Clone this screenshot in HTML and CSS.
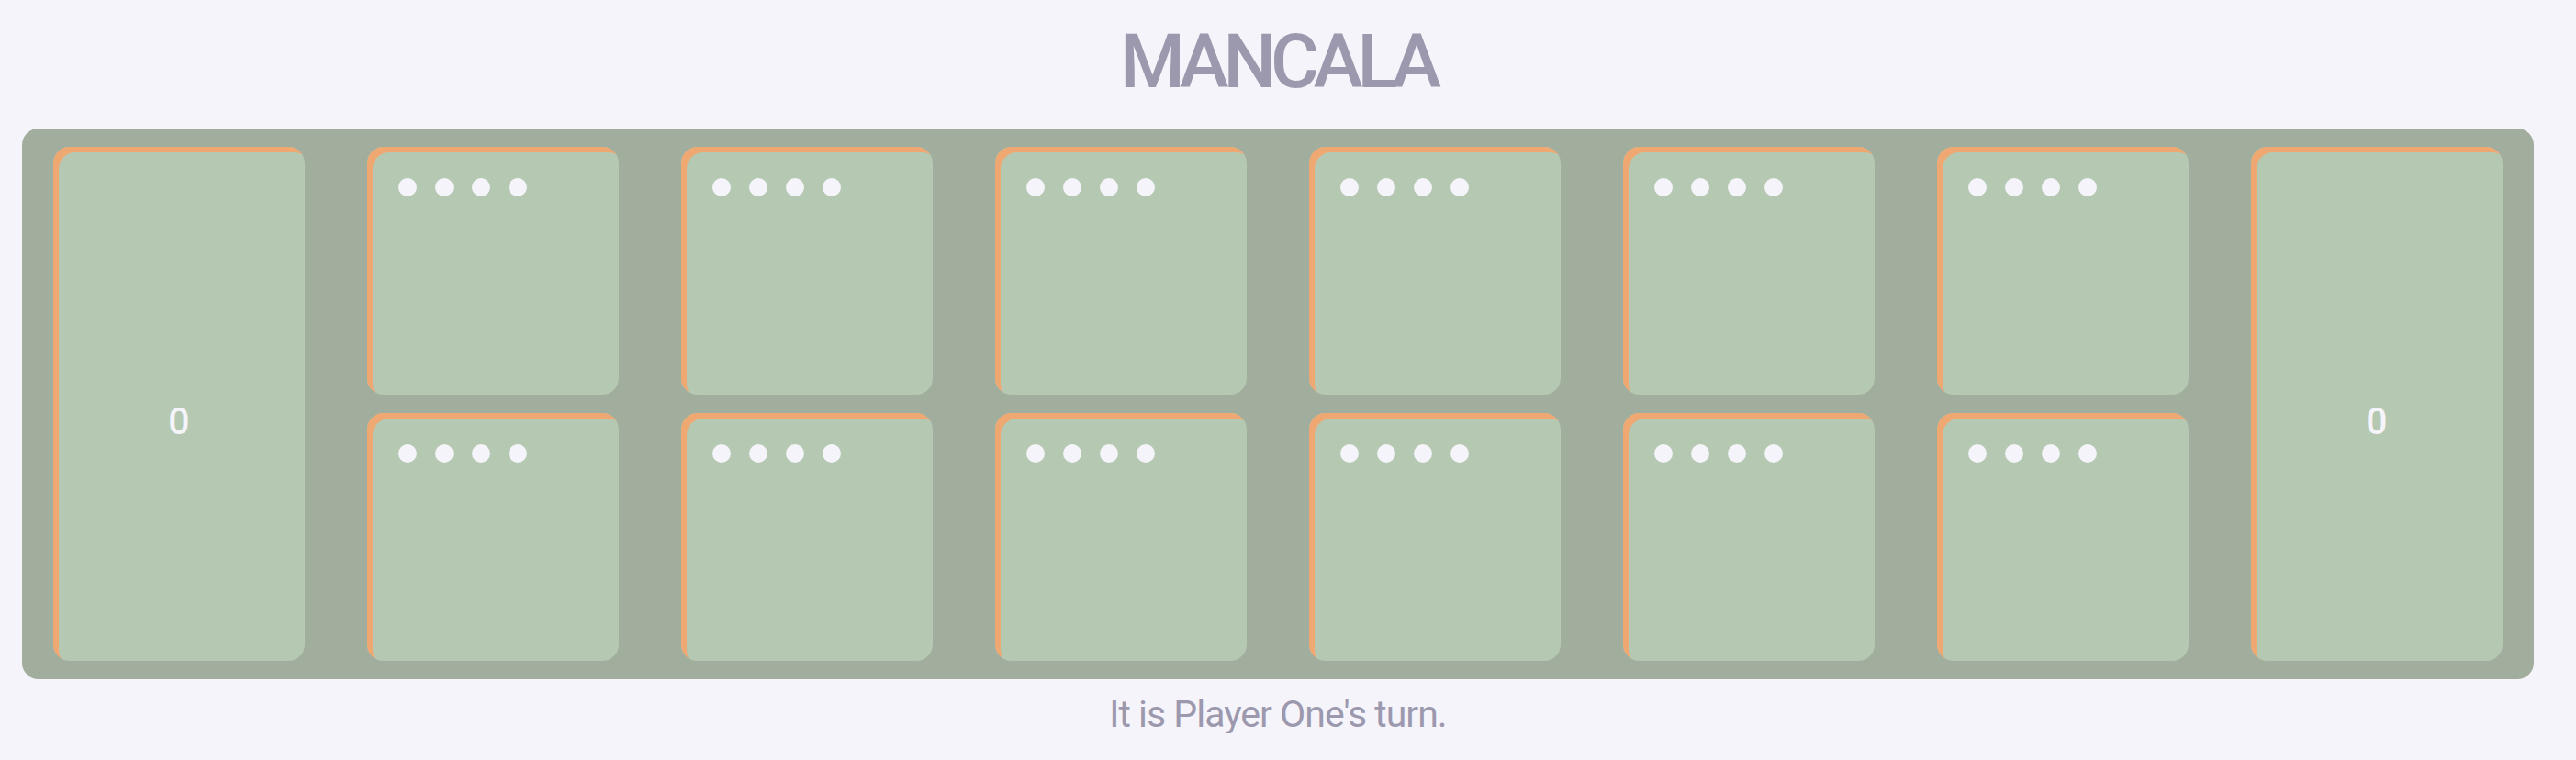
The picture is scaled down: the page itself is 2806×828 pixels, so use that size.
FILE: index.html
```html
<!DOCTYPE html>
<html lang="en">
<head>
<meta charset="utf-8">
<title>Mancala</title>
<link rel="stylesheet" href="styles.css">
</head>
<body>
<main class="game">
  <h1 class="title">MANCALA</h1>
  <div class="board">
    <div class="store store-left"><span class="count">0</span></div>
    <div class="pit"><span class="seed"></span><span class="seed"></span><span class="seed"></span><span class="seed"></span></div>
    <div class="pit"><span class="seed"></span><span class="seed"></span><span class="seed"></span><span class="seed"></span></div>
    <div class="pit"><span class="seed"></span><span class="seed"></span><span class="seed"></span><span class="seed"></span></div>
    <div class="pit"><span class="seed"></span><span class="seed"></span><span class="seed"></span><span class="seed"></span></div>
    <div class="pit"><span class="seed"></span><span class="seed"></span><span class="seed"></span><span class="seed"></span></div>
    <div class="pit"><span class="seed"></span><span class="seed"></span><span class="seed"></span><span class="seed"></span></div>
    <div class="store store-right"><span class="count">0</span></div>
    <div class="pit"><span class="seed"></span><span class="seed"></span><span class="seed"></span><span class="seed"></span></div>
    <div class="pit"><span class="seed"></span><span class="seed"></span><span class="seed"></span><span class="seed"></span></div>
    <div class="pit"><span class="seed"></span><span class="seed"></span><span class="seed"></span><span class="seed"></span></div>
    <div class="pit"><span class="seed"></span><span class="seed"></span><span class="seed"></span><span class="seed"></span></div>
    <div class="pit"><span class="seed"></span><span class="seed"></span><span class="seed"></span><span class="seed"></span></div>
    <div class="pit"><span class="seed"></span><span class="seed"></span><span class="seed"></span><span class="seed"></span></div>
  </div>
  <p class="status">It is Player One's turn.</p>
</main>
</body>
</html>
```
FILE: styles.css
```css
html, body {
  margin: 0;
  padding: 0;
  background: #f5f4fa;
}

.game {
  margin: 0 46px 0 24px;
  display: flex;
  flex-direction: column;
  align-items: center;
  font-family: Roboto, "Noto Sans", sans-serif;
  color: #9c99ae;
}

.title {
  margin: 0;
  height: 140px;
  box-sizing: border-box;
  padding-top: 27px;
  font-size: 81px;
  line-height: 1;
  font-weight: 500;
  font-kerning: none;
  letter-spacing: -6px;
}

.board {
  width: 100%;
  box-sizing: border-box;
  background: #a2ae9d;
  border-radius: 18px;
  padding: 20px 34px;
  display: grid;
  grid-template-columns: repeat(8, 274px);
  grid-template-rows: 270px 270px;
  column-gap: 68px;
  row-gap: 20px;
}

.pit,
.store {
  background: #b5c8b2;
  border-radius: 18px;
  box-shadow: inset 6px 6px 0 #f0a872;
}

.pit {
  display: flex;
  align-items: flex-start;
  gap: 20px;
  padding: 34px 0 0 34px;
  box-sizing: border-box;
}

.seed {
  width: 20px;
  height: 20px;
  border-radius: 50%;
  background: #f5f4fa;
}

.store {
  display: flex;
  justify-content: center;
  padding-top: 279px;
  box-sizing: border-box;
}

.store-left { grid-column: 1; grid-row: 1 / span 2; }
.store-right { grid-column: 8; grid-row: 1 / span 2; }

.count {
  font-size: 41px;
  line-height: 1;
  font-weight: 500;
  color: #f5f4fa;
}

.status {
  margin: 0;
  padding-top: 18px;
  font-size: 41px;
  line-height: 1;
  letter-spacing: -1px;
}
```
